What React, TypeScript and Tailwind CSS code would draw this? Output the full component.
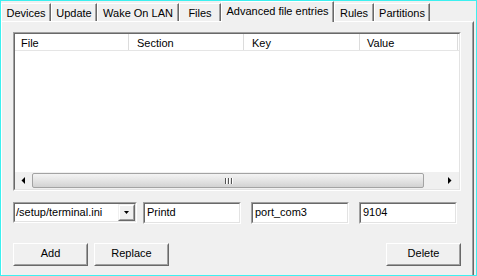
import React from "react";

function Sunken({ className = "", inner = "", children }: { className?: string; inner?: string; children?: React.ReactNode }) {
  return (
    <div className={`border border-t-[#a0a0a0] border-l-[#a0a0a0] border-r-white border-b-white ${className}`}>
      <div className={`h-full border border-t-[#696969] border-l-[#696969] border-r-[#e3e3e3] border-b-[#e3e3e3] ${inner}`}>{children}</div>
    </div>
  );
}

function Button({ label }: { label: string }) {
  return (
    <div className="w-[75px] h-[23px] border border-t-white border-l-white border-r-[#696969] border-b-[#696969]">
      <div className="h-full border border-t-[#f0f0f0] border-l-[#f0f0f0] border-r-[#a0a0a0] border-b-[#a0a0a0] bg-[#f0f0f0] flex items-center justify-center pb-[2px] text-black">
        {label}
      </div>
    </div>
  );
}

function Arrow({ dir }: { dir: "left" | "right" }) {
  return (
    <svg width="4" height="7" viewBox="0 0 4 7" className="block">
      {dir === "left" ? <polygon points="4,0 4,7 0.5,3.5" fill="#000" /> : <polygon points="0,0 0,7 3.5,3.5" fill="#000" />}
    </svg>
  );
}

export default function App() {
  const tabs = [
    { label: "Devices", w: "w-[50px]", sel: false },
    { label: "Update", w: "w-[46px]", sel: false },
    { label: "Wake On LAN", w: "w-[82px]", sel: false },
    { label: "Files", w: "w-[42px]", sel: false },
    { label: "Advanced file entries", w: "w-[113px]", sel: true },
    { label: "Rules", w: "w-[40px]", sel: false },
    { label: "Partitions", w: "w-[56px]", sel: false },
  ];
  const cols = [
    { label: "File", cls: "w-[114px] pl-[6px]" },
    { label: "Section", cls: "w-[115px] pl-[8px]" },
    { label: "Key", cls: "w-[116px] pl-[8px]" },
    { label: "Value", cls: "w-[98px] pl-[7px]" },
  ];
  return (
    <div className="w-[477px] h-[276px] bg-[#f0f0f0] border border-[#3cf0f0] overflow-hidden flex flex-col font-['Liberation_Sans',Arial,sans-serif] text-[11px] leading-[13px] text-black">
      {/* tab strip */}
      <div className="flex h-[20px] shrink-0">
        {tabs.map((t) =>
          t.sel ? (
            <div
              key={t.label}
              className={`${t.w} h-[21px] relative z-10 bg-[#f0f0f0] border-t border-l border-white border-r border-r-[#696969] shadow-[inset_-1px_0_0_#a0a0a0] flex items-center justify-center pb-[2px] whitespace-nowrap`}
            >
              {t.label}
            </div>
          ) : (
            <div
              key={t.label}
              className={`${t.w} mt-[2px] h-[18px] bg-[#f0f0f0] border-t border-l border-white border-r border-r-[#696969] shadow-[inset_-1px_0_0_#a0a0a0] flex items-center justify-center pt-[2px] whitespace-nowrap`}
            >
              {t.label}
            </div>
          )
        )}
      </div>
      {/* tab page */}
      <div className="w-[473px] flex-1 min-h-[260px] border border-t-white border-l-white border-r-[#696969] border-b-[#696969]">
        <div className="h-full border border-t-[#f0f0f0] border-l-[#f0f0f0] border-r-[#a0a0a0] border-b-[#a0a0a0] pl-[10px] pt-[9px]">
          <div className="w-[448px] flex flex-col">
            {/* list view */}
            <Sunken className="w-[448px] h-[159px]" inner="bg-white flex flex-col">
              <div className="h-[17px] flex border-b border-[#e5e5e5] shrink-0">
                {cols.map((c) => (
                  <div key={c.label} className={`${c.cls} h-full border-r border-[#dcdcdc] pt-[3px] whitespace-nowrap`}>
                    {c.label}
                  </div>
                ))}
              </div>
              <div className="flex-1" />
              <div className="h-[17px] flex bg-[#f0f0f0] shrink-0">
                <div className="w-[17px] h-full flex items-center justify-center pr-[1px]">
                  <Arrow dir="left" />
                </div>
                <div className="w-[392px] my-[1px] rounded-[2px] border border-[#a3a3a3] bg-gradient-to-b from-[#f4f4f4] via-[#e4e4e4] to-[#d2d2d2] flex items-center justify-center gap-[2px]">
                  <div className="w-[1px] h-[6px] bg-[#555] shadow-[1px_0_0_#fff]" />
                  <div className="w-[1px] h-[6px] bg-[#555] shadow-[1px_0_0_#fff]" />
                  <div className="w-[1px] h-[6px] bg-[#555] shadow-[1px_0_0_#fff]" />
                </div>
                <div className="w-[18px] h-full" />
                <div className="w-[17px] h-full flex items-center justify-center pr-[2px]">
                  <Arrow dir="right" />
                </div>
              </div>
            </Sunken>
            {/* inputs */}
            <div className="flex mt-[11px] items-start">
              <Sunken className="w-[124px] h-[21px]" inner="bg-white flex">
                <div className="flex-1 pl-[1px] pt-[2px] whitespace-nowrap">/setup/terminal.ini</div>
                <div className="w-[17px] h-[17px] border border-t-[#f0f0f0] border-l-[#f0f0f0] border-r-[#696969] border-b-[#696969]">
                  <div className="h-full border border-t-white border-l-white border-r-[#a0a0a0] border-b-[#a0a0a0] bg-[#f0f0f0] flex items-center justify-center">
                    <svg width="5" height="3" viewBox="0 0 5 3" className="block">
                      <polygon points="0,0 5,0 2.5,3" fill="#000" />
                    </svg>
                  </div>
                </div>
              </Sunken>
              <Sunken className="w-[98px] h-[22px] ml-[6px]" inner="bg-white pl-[2px] pt-[2px]">
                Printd
              </Sunken>
              <Sunken className="w-[98px] h-[22px] ml-[10px]" inner="bg-white pl-[2px] pt-[2px]">
                port_com3
              </Sunken>
              <Sunken className="w-[98px] h-[22px] ml-[10px]" inner="bg-white pl-[2px] pt-[2px]">
                9104
              </Sunken>
            </div>
            {/* buttons */}
            <div className="flex mt-[19px]">
              <Button label="Add" />
              <div className="ml-[6px]">
                <Button label="Replace" />
              </div>
              <div className="ml-auto">
                <Button label="Delete" />
              </div>
            </div>
          </div>
        </div>
      </div>
    </div>
  );
}
